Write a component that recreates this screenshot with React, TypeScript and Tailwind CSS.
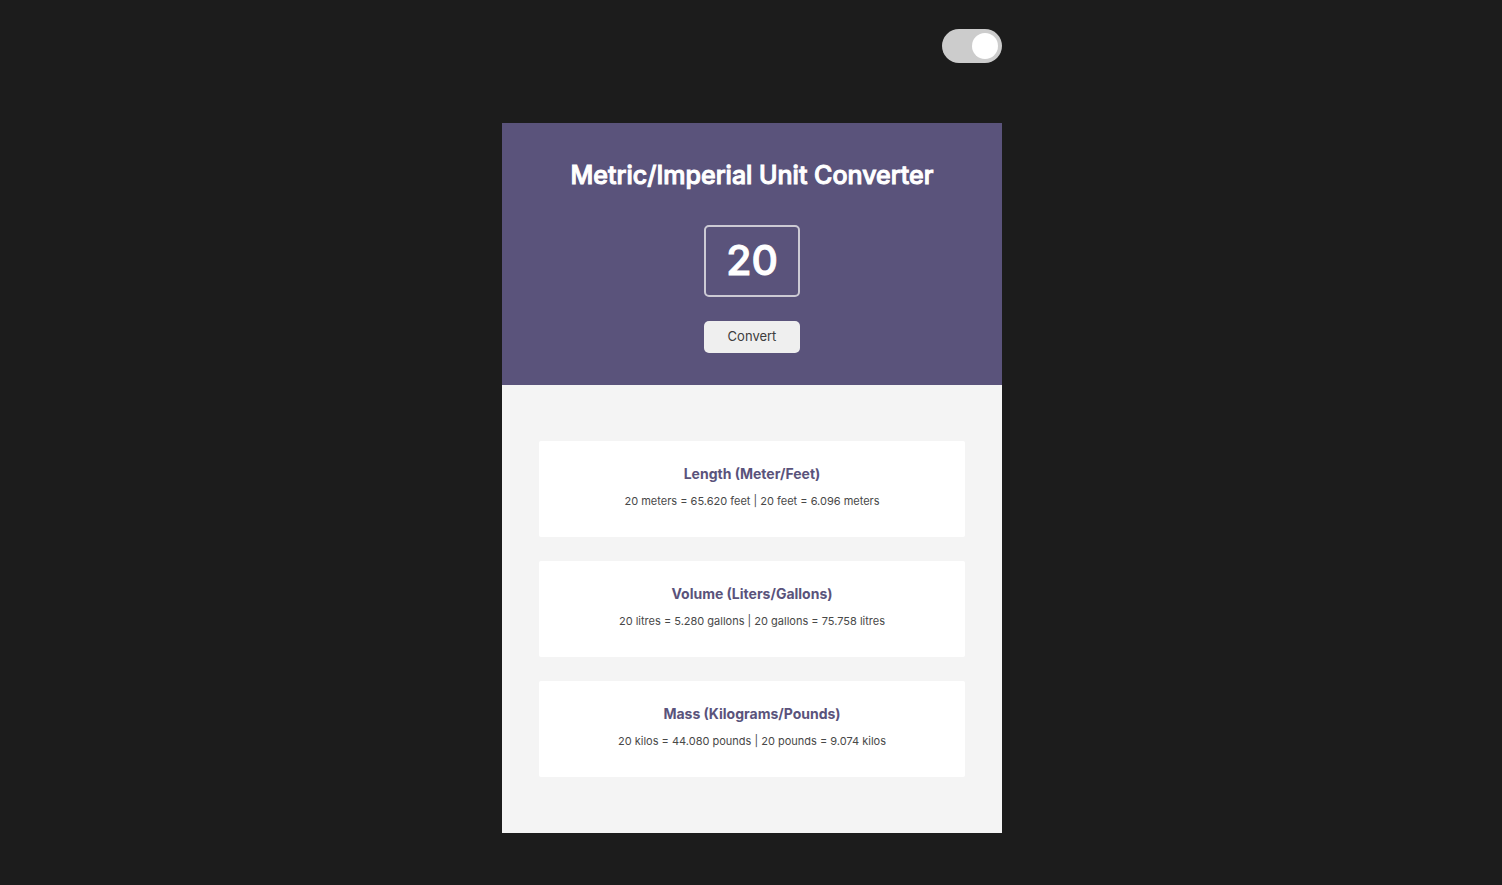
import { useState } from "react";

const units = [
  { title: "Length (Meter/Feet)", metric: "meters", imperial: "feet", rate: 3.281 },
  { title: "Volume (Liters/Gallons)", metric: "litres", imperial: "gallons", rate: 0.264 },
  { title: "Mass (Kilograms/Pounds)", metric: "kilos", imperial: "pounds", rate: 2.204 },
];

export default function App() {
  const [entry, setEntry] = useState("20");
  const [value, setValue] = useState(20);
  const [dark, setDark] = useState(false);

  return (
    <div className="min-h-screen bg-[#1c1c1c] pt-[29px] pb-[52px] pl-0.5 font-['Inter',sans-serif]">
      <div className="mx-auto w-full max-w-[500px]">
        <div className="mb-[60px] flex justify-end">
          <label className="flex h-[34px] w-[60px] cursor-pointer items-center justify-end rounded-full bg-[#cccccc] p-1 has-checked:justify-start">
            <input
              type="checkbox"
              aria-label="Dark mode"
              className="peer sr-only"
              checked={dark}
              onChange={(e) => setDark(e.target.checked)}
            />
            <span className="size-[26px] rounded-full bg-white" />
          </label>
        </div>
        <main>
          <form
            className="flex flex-col items-center bg-[#5a537b] pt-9 pb-8 text-white"
            onSubmit={(e) => {
              e.preventDefault();
              setValue(Number(entry) || 0);
            }}
          >
            <h1 className="mb-[34px] text-[25px] leading-8 font-medium [-webkit-text-stroke:1px_white]">
              Metric/Imperial Unit Converter
            </h1>
            <input
              type="text"
              aria-label="Value to convert"
              className="mb-6 h-[72px] w-24 rounded-[5px] border-2 border-[#cccad4] bg-transparent pb-0.5 text-center text-[41px] font-medium outline-none [-webkit-text-stroke:1px_white]"
              value={entry}
              onChange={(e) => setEntry(e.target.value)}
            />
            <button type="submit" className="h-8 w-24 rounded-[5px] bg-[#efefef] text-[13px] text-[#3d3d3d]">
              Convert
            </button>
          </form>
          <div className="flex flex-col gap-6 bg-[#f4f4f4] px-[37px] py-14">
            {units.map((u) => (
              <section key={u.title} className="rounded-[2px] bg-white pt-6 pb-[26px] text-center">
                <h2 className="mb-2 text-[14px] leading-[18px] font-bold text-[#5a537b]">{u.title}</h2>
                <p className="text-[11px] leading-5 text-[#484848]">
                  {`${value} ${u.metric} = ${(value * u.rate).toFixed(3)} ${u.imperial} | ${value} ${u.imperial} = ${(value / u.rate).toFixed(3)} ${u.metric}`}
                </p>
              </section>
            ))}
          </div>
        </main>
      </div>
    </div>
  );
}
